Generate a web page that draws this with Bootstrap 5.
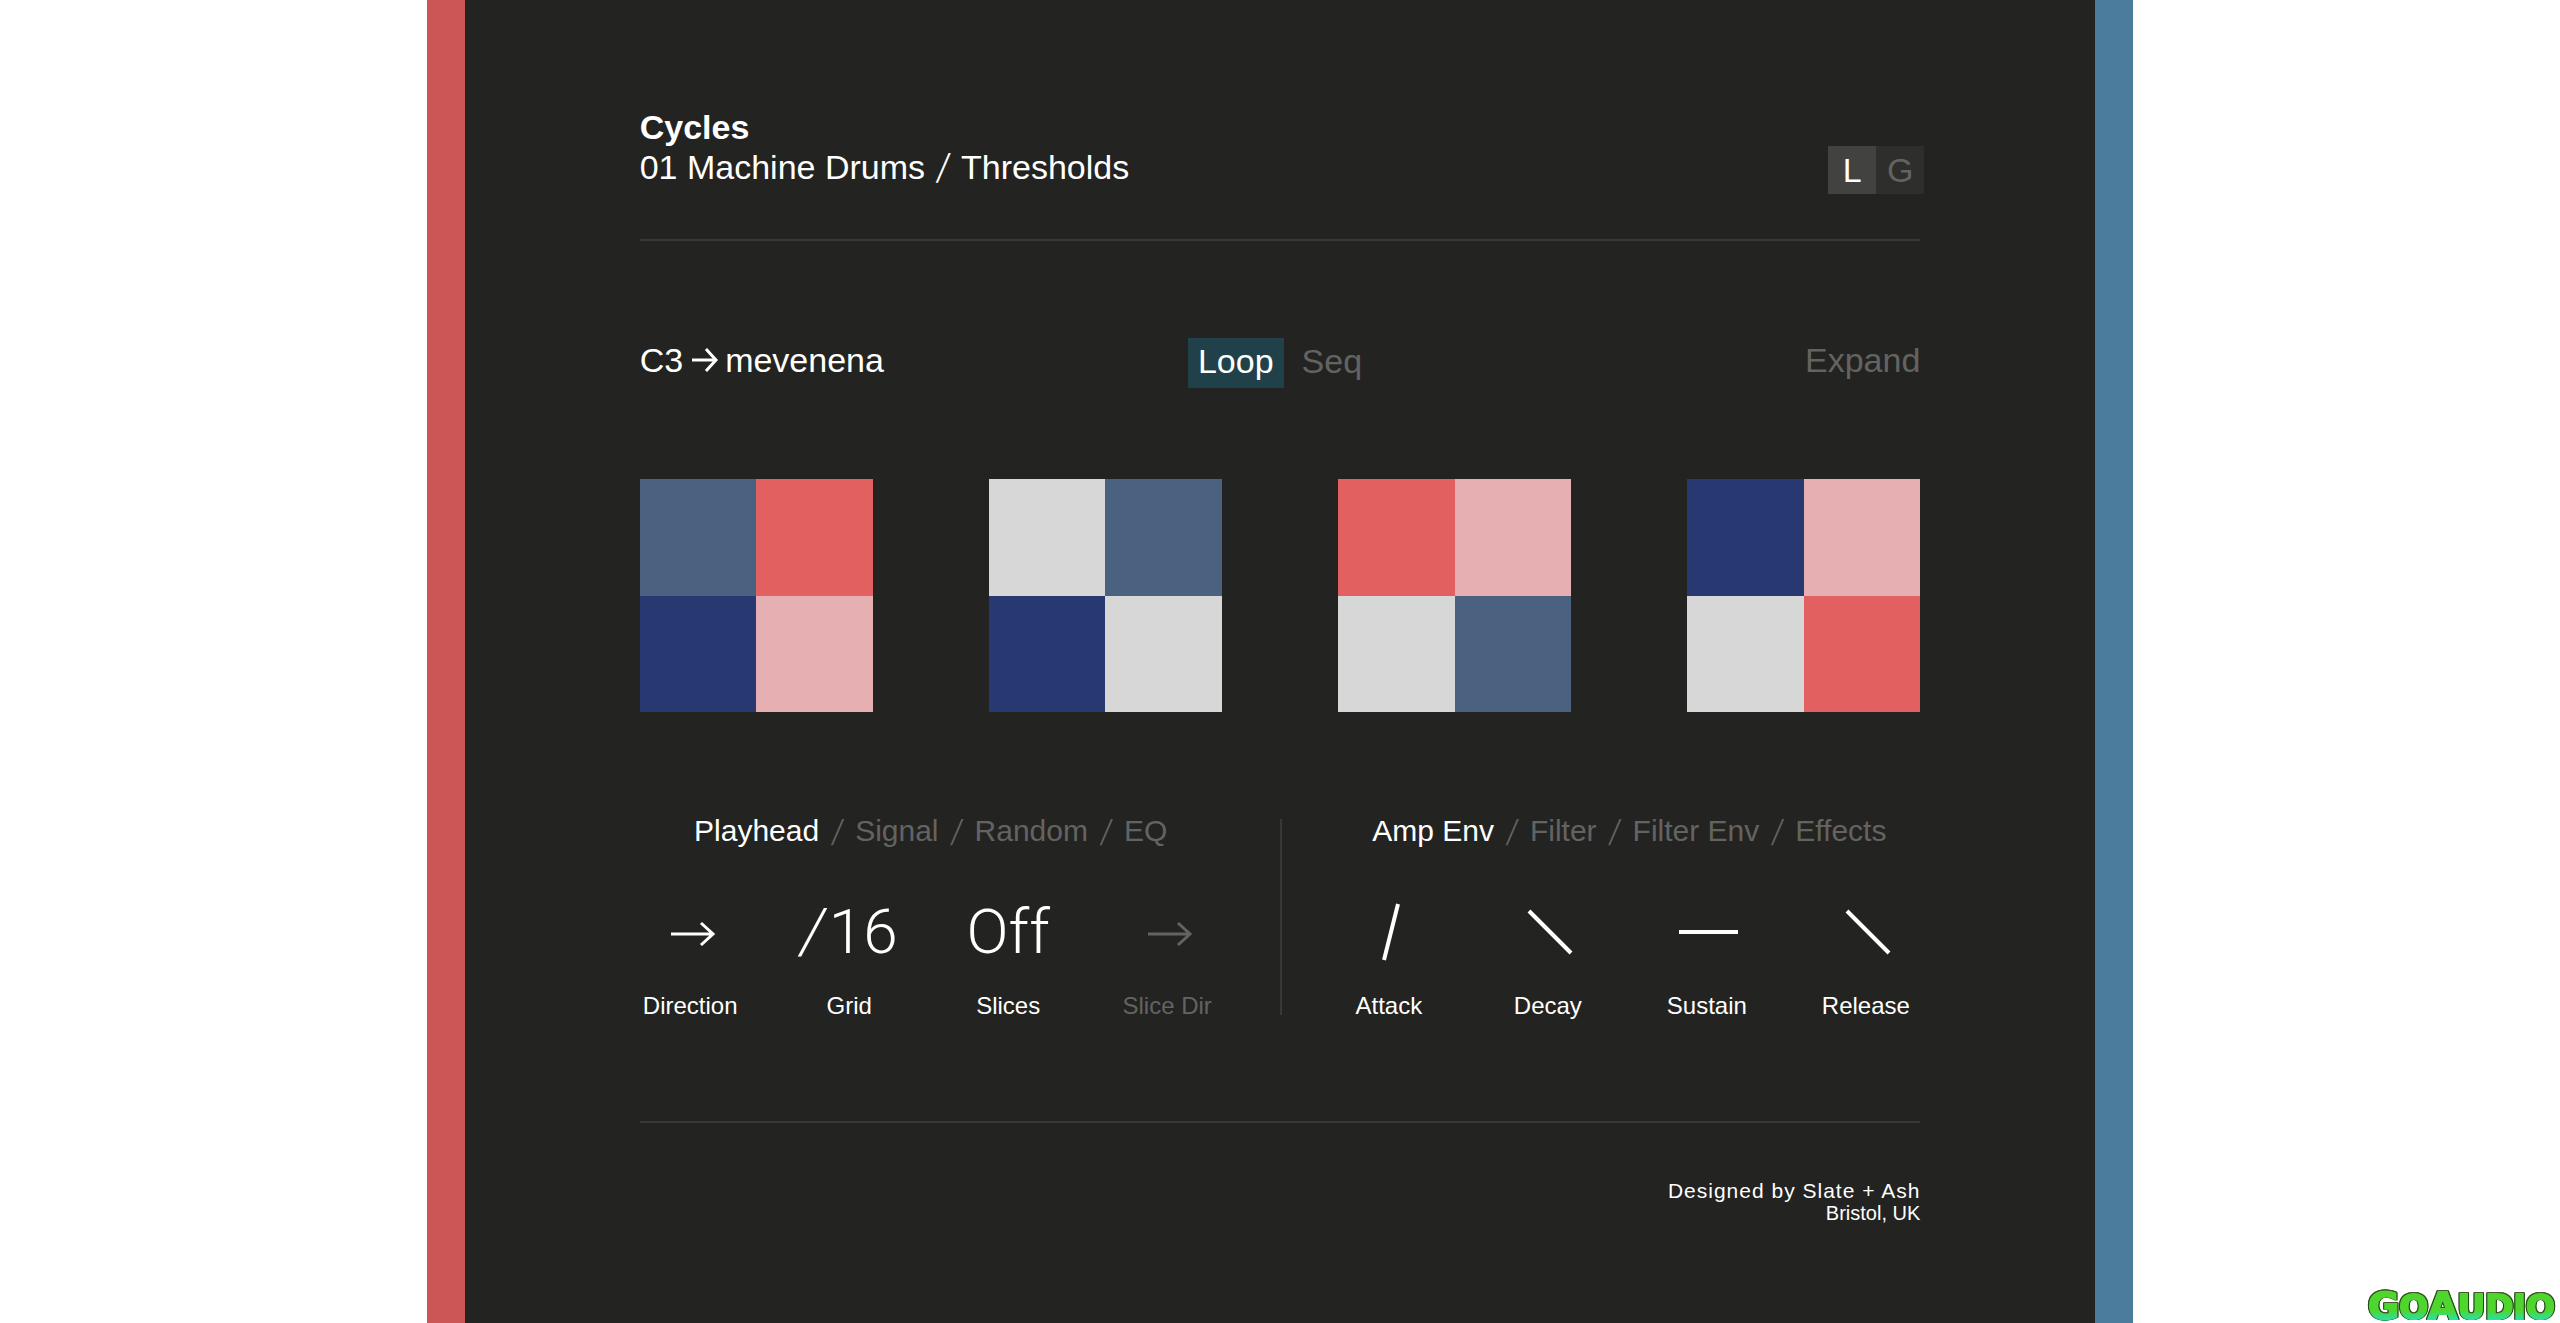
<!DOCTYPE html>
<html lang="en">
<head>
<meta charset="utf-8">
<meta name="viewport" content="width=device-width, initial-scale=1">
<title>Cycles</title>
<link rel="stylesheet" href="https://cdn.jsdelivr.net/npm/bootstrap@5.3.0/dist/css/bootstrap.min.css">
<style>
:root { --ink: #232321; --rule: #383837; --dim: #636362; --steel: #4a627f; --coral: #e36060; --navy: #283870; --pink: #e6afb1; --ash: #d7d7d7; }
body { font-family: "Liberation Sans", Arial, sans-serif; background: #fff; color: #fff; overflow-x: hidden; }
.panel { background: var(--ink); border-left: 38px solid #cb5656; border-right: 38px solid #4b7b9d; padding: 107px 0 0; }
.inset { margin: 0 175px; }
.txt { font-size: 34px; line-height: 40px; }
.plain { background: none; border: 0; padding: 0; color: inherit; font: inherit; text-decoration: none; }
.dim { color: var(--dim); }
.slash { font-family: Inter, sans-serif; font-weight: 300; font-style: italic; width: 36px; text-align: center; }
.top-bar { padding-bottom: 45px; border-bottom: 2px solid var(--rule); }
.titles { padding-bottom: 7px; }
.mode { width: 48px; height: 48px; margin: 0; color: var(--dim); background: #2e2e2d; }
.mode.on { color: #fff; background: #424240; }
.modes { margin-right: -4px; }
.view-bar { margin-top: 97px; }
.side { flex: 1 1 0; padding-bottom: 6px; }
.view { height: 50px; padding: 0 10px 4px; }
.view.on { background: #20414a; color: #fff; }
.pads { margin-top: 91px; gap: 116px; }
.pad { flex: 1 1 0; aspect-ratio: 1; display: grid; grid-template: 1fr 1fr / 1fr 1fr; }
.steel { background: var(--steel); } .coral { background: var(--coral); } .navy { background: var(--navy); } .pink { background: var(--pink); } .ash { background: var(--ash); }
.controls { margin: 101px 150px 0 146px; }
.split { width: 2px; height: 196px; margin: 6px 27px 0 auto; background: var(--rule); }
.group { flex: 0 1 636px; }
.tabs { font-size: 30px; line-height: 36px; padding-left: 4px; }
.knobs { margin-top: 53px; }
.knob { flex: 1 1 0; }
.face { height: 60px; font-family: Roboto, sans-serif; font-weight: 300; font-size: 62px; line-height: 60px; }
.face em { margin-right: 4px; }
.name { font-size: 24px; line-height: 28px; margin-top: 30px; }
svg { fill: none; stroke: currentColor; overflow: visible; }
.foot { margin-top: 101px; padding-top: 56px; border-top: 2px solid var(--rule); font-size: 20px; line-height: 23px; }
.tracked { font-size: 21px; letter-spacing: 1px; }
.stamp { right: 0; bottom: 0; }
.stamp svg { filter: drop-shadow(1px 0 0 #1c4a12) drop-shadow(-1px 0 0 #1c4a12) drop-shadow(0 -1px 0 #4a5a30); }
</style>
</head>
<body class="position-relative">
<div class="row g-0 justify-content-center min-vh-100">
<main class="col-8 panel">
  <header class="inset top-bar d-flex justify-content-between align-items-end">
    <div class="txt titles">
      <h1 class="txt fw-bold m-0">Cycles</h1>
      <div class="d-flex"><span>01 Machine Drums</span><span class="slash">/</span><span>Thresholds</span></div>
    </div>
    <div class="modes d-flex txt">
      <button class="plain mode on" type="button">L</button>
      <button class="plain mode" type="button">G</button>
    </div>
  </header>

  <nav class="inset view-bar d-flex align-items-center txt">
    <div class="side d-flex align-items-center">
      <span>C3</span>
      <svg class="mx-2" width="26" height="26" stroke-width="3"><path d="M1 13H25M15 2L25 13L15 24"/></svg>
      <span>mevenena</span>
    </div>
    <div class="d-flex">
      <button class="plain view on" type="button">Loop</button>
      <button class="plain view dim ms-2" type="button">Seq</button>
    </div>
    <div class="side text-end"><button class="plain dim" type="button">Expand</button></div>
  </nav>

  <section class="inset pads d-flex">
    <div class="pad"><i class="steel"></i><i class="coral"></i><i class="navy"></i><i class="pink"></i></div>
    <div class="pad"><i class="ash"></i><i class="steel"></i><i class="navy"></i><i class="ash"></i></div>
    <div class="pad"><i class="coral"></i><i class="pink"></i><i class="ash"></i><i class="steel"></i></div>
    <div class="pad"><i class="navy"></i><i class="pink"></i><i class="ash"></i><i class="coral"></i></div>
  </section>

  <section class="controls d-flex">
    <div class="group">
      <div class="tabs d-flex justify-content-center dim">
        <a class="plain text-white" href="#playhead">Playhead</a><span class="slash">/</span><a class="plain" href="#signal">Signal</a><span class="slash">/</span><a class="plain" href="#random">Random</a><span class="slash">/</span><a class="plain" href="#eq">EQ</a>
      </div>
      <div class="knobs d-flex">
        <button class="plain knob" type="button"><div class="face d-flex justify-content-center"><svg width="60" height="60" stroke-width="3"><path d="M11 32H53M41 21L53 32L41 43"/></svg></div><div class="name">Direction</div></button>
        <button class="plain knob" type="button"><div class="face"><em>/</em>16</div><div class="name">Grid</div></button>
        <button class="plain knob" type="button"><div class="face">Off</div><div class="name">Slices</div></button>
        <button class="plain knob dim" type="button"><div class="face d-flex justify-content-center"><svg width="60" height="60" stroke-width="3"><path d="M11 32H53M41 21L53 32L41 43"/></svg></div><div class="name">Slice Dir</div></button>
      </div>
    </div>
    <div class="split"></div>
    <div class="group">
      <div class="tabs d-flex justify-content-center dim">
        <a class="plain text-white" href="#amp-env">Amp Env</a><span class="slash">/</span><a class="plain" href="#filter">Filter</a><span class="slash">/</span><a class="plain" href="#filter-env">Filter Env</a><span class="slash">/</span><a class="plain" href="#effects">Effects</a>
      </div>
      <div class="knobs d-flex">
        <button class="plain knob" type="button"><div class="face d-flex justify-content-center"><svg width="60" height="60" stroke-width="4"><path d="M25 58L39 2"/></svg></div><div class="name">Attack</div></button>
        <button class="plain knob" type="button"><div class="face d-flex justify-content-center"><svg width="60" height="60" stroke-width="4"><path d="M11 9L53 51"/></svg></div><div class="name">Decay</div></button>
        <button class="plain knob" type="button"><div class="face d-flex justify-content-center"><svg width="60" height="60" stroke-width="4"><path d="M2 30H61"/></svg></div><div class="name">Sustain</div></button>
        <button class="plain knob" type="button"><div class="face d-flex justify-content-center"><svg width="60" height="60" stroke-width="4"><path d="M11 9L53 51"/></svg></div><div class="name">Release</div></button>
      </div>
    </div>
  </section>

  <footer class="inset foot text-end">
    <div class="tracked">Designed by Slate + Ash</div>
    <div>Bristol, UK</div>
  </footer>
</main>
</div>
<div class="stamp position-absolute">
  <svg class="d-block" width="192" height="34" role="img" aria-label="GoAudio">
    <defs><linearGradient id="lime" x1="0" y1="0" x2="0" y2="1"><stop offset=".6" stop-color="#4fd62e"/><stop offset=".8" stop-color="#2be0a0"/></linearGradient></defs>
    <text x="0" y="30" font-family="DejaVu Sans, sans-serif" font-weight="700" font-size="38" fill="url(#lime)" stroke="url(#lime)" stroke-width="2">G<tspan font-size="34">O</tspan>A<tspan font-size="34">UDIO</tspan></text>
  </svg>
</div>
<script src="https://cdn.jsdelivr.net/npm/bootstrap@5.3.0/dist/js/bootstrap.bundle.min.js"></script>
</body>
</html>
